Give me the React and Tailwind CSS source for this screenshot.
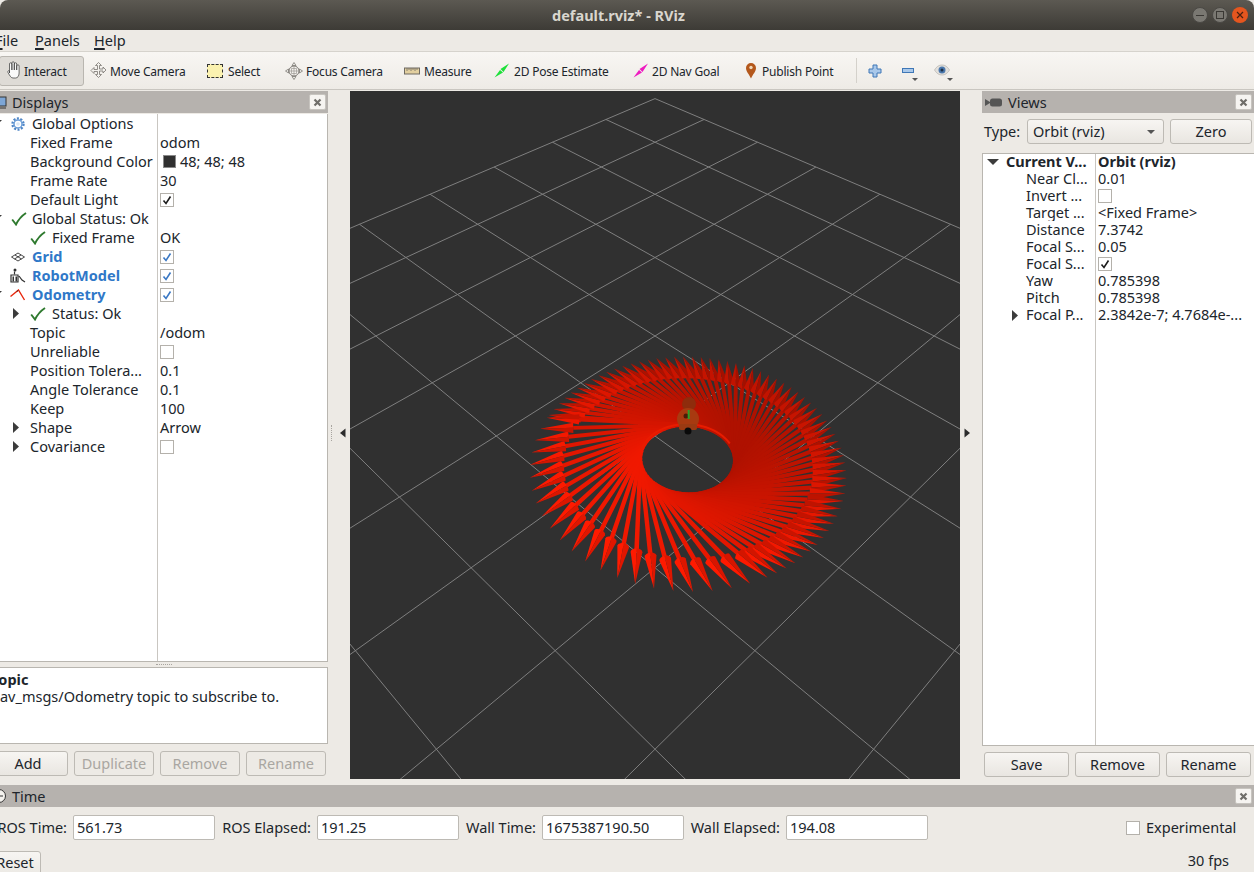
import React from 'react';

const FONT = { fontFamily: '"Noto Sans", sans-serif' };

// ground plane (s, t) to screen pixels, fitted to the grid in the reference
const project = (s, t) => {
  const w = 1 - 0.137 * t;
  return [655 + (158.7 * s) / w, 436 + (113.7 * t) / w];
};
const toPoints = (list) => list.map((p) => `${p[0].toFixed(1)},${p[1].toFixed(1)}`).join(' ');

const buildGrid = () => {
  const lines = [];
  for (let i = -5; i <= 5; i++) {
    // p, q lines of the 10x10 grid, s = (p - q) / 2, t = (p + q) / 2
    const a = project((i + 5) / 2, (i - 5) / 2);
    const b = project((i - 5) / 2, (i + 5) / 2);
    const c = project((-5 - i) / 2, (-5 + i) / 2);
    const d = project((5 - i) / 2, (5 + i) / 2);
    lines.push([a, b], [c, d]);
  }
  return lines;
};

const buildArrows = () => {
  const out = [];
  const r = 0.29;
  const L = 0.92;
  const head = 0.21;
  const cs = 0.2;
  const ct = 0.19;
  const alpha = (Math.atan(L / r) * 180) / Math.PI;
  // walk backwards from the newest pose; poses are further apart in the lower left
  const angles = [];
  let deg = 274;
  while (deg > 274 - 360) {
    angles.unshift(deg);
    const phi = ((deg - alpha) % 360 + 360) % 360;
    deg -= phi > 70 && phi < 205 ? 6.2 : 3.7;
  }
  angles.forEach((a, i) => {
    const th = (a * Math.PI) / 180;
    const px = cs + r * Math.cos(th);
    const py = ct + r * Math.sin(th);
    const dx = Math.sin(th);
    const dy = -Math.cos(th);
    const phi = th - (alpha * Math.PI) / 180;
    const f = 0.88 + 0.14 * Math.cos(phi - (120 * Math.PI) / 180);
    const col = (m) => `rgb(${Math.min(255, Math.round(262 * f * m))},${Math.round(26 * f * m)},0)`;
    const bt = py + dy * (L - head);
    const tt = py + dy * L;
    const P = project(px, py);
    const B = project(px + dx * (L - head), bt);
    const T = project(px + dx * L, tt);
    // cones and shafts are round, so widths are taken on screen, not on the ground
    const len = Math.hypot(T[0] - P[0], T[1] - P[1]);
    const ux = (T[0] - P[0]) / len;
    const uy = (T[1] - P[1]) / len;
    let nx = -uy;
    let ny = ux;
    if (nx > 0) {
      nx = -nx;
      ny = -ny;
    }
    const shaftAt = (Q, t, sign) => {
      const half = 2 / (1 - 0.137 * t);
      return [Q[0] + sign * nx * half, Q[1] + sign * ny * half];
    };
    const hw = 5.2 / (1 - 0.137 * bt);
    const bulge = hw * 0.6 * Math.abs(uy);
    const arc = (sign) =>
      [0.9, 0.6, 0.3, 0].map((c) => {
        const sn = Math.sqrt(1 - c * c);
        return [B[0] + sign * nx * hw * c - ux * bulge * sn, B[1] + sign * ny * hw * c - uy * bulge * sn];
      });
    out.push({
      key: i,
      shaft: toPoints([shaftAt(P, py, 1), shaftAt(B, bt, 1), shaftAt(B, bt, -1), shaftAt(P, py, -1)]),
      shaftColor: col(0.9),
      lit: toPoints([T, [B[0] + nx * hw, B[1] + ny * hw], ...arc(1)]),
      litColor: col(1),
      dark: toPoints([T, [B[0] - nx * hw, B[1] - ny * hw], ...arc(-1)]),
      darkColor: col(0.84),
    });
  });
  return out;
};

const GRID = buildGrid();
const ARROWS = buildArrows();
const RIM = (() => {
  const list = [];
  for (let a = 195; a <= 335; a += 5) {
    const th = (a * Math.PI) / 180;
    list.push(project(0.2 + 0.295 * Math.cos(th), 0.19 + 0.295 * Math.sin(th)));
  }
  return toPoints(list);
})();

const Scene = () => (
  <svg width="610" height="688" viewBox="350 91 610 688" className="block">
    {GRID.map(([a, b], i) => (
      <line key={i} x1={a[0]} y1={a[1]} x2={b[0]} y2={b[1]} stroke="#7f7f7f" strokeWidth="1" />
    ))}
    {ARROWS.map((a) => (
      <g key={a.key}>
        <polygon points={a.shaft} fill={a.shaftColor} />
        <polygon points={a.lit} fill={a.litColor} />
        <polygon points={a.dark} fill={a.darkColor} />
      </g>
    ))}
    <polyline points={RIM} fill="none" stroke="#e81c00" strokeWidth="2" />
    <circle cx="689" cy="404" r="7" fill="#8e2c0c" />
    <circle cx="688" cy="419" r="11" fill="#a83a10" />
    <rect x="679" y="424" width="18" height="6" rx="2" fill="#9a3a12" />
    <circle cx="686" cy="416" r="2.500" fill="#4a1c08" />
    <line x1="688.7" y1="410" x2="688.7" y2="419" stroke="#2aa02a" strokeWidth="2" />
    <circle cx="688" cy="431" r="3.500" fill="#0a0a0a" />
  </svg>
);

const Chevron = ({ open }) =>
  open ? (
    <svg width="12" height="10" viewBox="0 0 12 10" className="block shrink-0">
      <path d="M0 2h12L6 8z" fill="#3c3c3c" />
    </svg>
  ) : (
    <svg width="10" height="11" viewBox="0 0 10 11" className="block shrink-0">
      <path d="M3 0v11L9 5.500z" fill="#3c3c3c" />
    </svg>
  );

const Check = () => (
  <svg width="16" height="14" viewBox="0 0 16 14" className="shrink-0">
    <path d="M1.200 7.500L5 12.500C7.200 8 10.500 4 15 1" fill="none" stroke="#2f7a2f" strokeWidth="1.900" />
  </svg>
);

const CheckBox = ({ on, blue }) => (
  <span className="flex h-[14px] w-[14px] shrink-0 items-center justify-center border border-[#b4b1ab] bg-white">
    {on && (
      <svg width="10" height="10" viewBox="0 0 10 10">
        <path d="M1.500 5.500L4 8.500 8.500 1.500" fill="none" stroke={blue ? '#3a78c4' : '#1c1c1c'} strokeWidth="1.600" />
      </svg>
    )}
  </span>
);

const GearIcon = () => (
  <svg width="14" height="14" viewBox="0 0 14 14" className="shrink-0">
    <circle cx="7" cy="7" r="5.500" fill="none" stroke="#4f86c6" strokeWidth="2.400" strokeDasharray="2 1.450" />
    <circle cx="7" cy="7" r="4" fill="none" stroke="#6d9fd8" strokeWidth="1.500" />
    <circle cx="7" cy="7" r="1.800" fill="#dbe8f6" />
  </svg>
);

const GridIcon = () => (
  <svg width="14" height="10" viewBox="0 0 14 10" className="shrink-0">
    <path d="M7 1L13.500 5 7 9 .5 5zM4 3l6.500 4M10 3L3.500 7" fill="none" stroke="#333" strokeWidth="0.900" />
  </svg>
);

const RobotIcon = () => (
  <svg width="16" height="15" viewBox="0 0 16 15" className="shrink-0">
    <circle cx="5" cy="2" r="1.500" fill="#333" />
    <path d="M1 7h7v7H1zM9 8l3 4 3 2" fill="none" stroke="#333" strokeWidth="1.200" />
    <path d="M2.500 8.500h1.500v5H2.500zM5.500 8.500h1.500v5H5.500z" fill="#333" />
    <path d="M4.500 3.500v3" stroke="#333" strokeWidth="1.200" />
  </svg>
);

const OdomIcon = () => (
  <svg width="17" height="12" viewBox="0 0 17 12" className="shrink-0">
    <path d="M0.500 7.500L8.500 1l6 10" fill="none" stroke="#e8260c" strokeWidth="1.400" />
    <path d="M8.500 1l-2 1 .5 1" fill="#222" />
  </svg>
);

const Row = ({ h = 19, arrow, indent = 0, icon, iconW = 0, label, bold, blue, value, box, boxBlue, swatch, col = 157, valueBold }) => (
  <div className="flex items-center whitespace-nowrap" style={{ height: h }}>
    <div className="relative flex h-full shrink-0 items-center overflow-hidden" style={{ width: col, paddingLeft: indent }}>
      {arrow && <span className="absolute top-[4px]" style={{ left: arrow.x }}><Chevron open={arrow.open} /></span>}
      {icon && <span className="flex shrink-0 items-center" style={{ width: iconW }}>{icon}</span>}
      <span className={`${bold ? 'font-bold' : ''} ${blue ? 'text-[#2f78c8]' : ''}`}>{label}</span>
    </div>
    <div className={`flex h-full flex-1 items-center gap-[4px] border-l border-[#c9c6c1] pl-[2px] ${valueBold ? 'font-bold' : ''}`}>
      {swatch && <span className="ml-[3px] h-[13px] w-[13px] shrink-0 border border-[#8a8a8a] bg-[#303030]" />}
      {value}
      {box && <CheckBox on={box === 'on'} blue={boxBlue} />}
    </div>
  </div>
);

const CloseBtn = () => (
  <span className="flex h-[16px] w-[17px] shrink-0 items-center justify-center rounded-[2px] border border-[#c7c4bf] bg-[#f6f4f1]">
    <svg width="9" height="9" viewBox="0 0 9 9">
      <path d="M1.500 1.500l6 6M7.500 1.500l-6 6" stroke="#6f6d69" strokeWidth="2.200" />
    </svg>
  </span>
);

const DockHeader = ({ icon, title }) => (
  <div className="flex h-[22px] shrink-0 items-center justify-between bg-[#b6b2ae] pr-[2px] text-[14.500px]">
    <div className="flex items-center">
      {icon}
      <span>{title}</span>
    </div>
    <CloseBtn />
  </div>
);

const Btn = ({ children, disabled, className = '' }) => (
  <button
    className={`flex items-center justify-center rounded-[3px] border border-[#bdbab4] text-[14.500px] ${
      disabled ? 'bg-[#edeae5] text-[#a9a6a1]' : 'bg-gradient-to-b from-[#f7f5f2] to-[#e9e6e1]'
    } ${className}`}
  >
    {children}
  </button>
);

const Tool = ({ width, icon, label }) => (
  <div className="flex h-full shrink-0 items-center whitespace-nowrap text-[12px] tracking-[-0.2px]" style={{ width }}>
    {icon}
    <span className="pt-[3px]">{label}</span>
  </div>
);

const TimeField = ({ label, labelW, value }) => (
  <>
    <span className="flex shrink-0 justify-end whitespace-nowrap" style={{ width: labelW }}>{label}</span>
    <span className="ml-[6px] flex h-[25px] w-[142px] shrink-0 items-center rounded-[2px] border border-[#bdbab4] bg-white pl-[3px]">{value}</span>
  </>
);

const Dots = ({ vertical }) => (
  <span className={vertical ? 'h-[16px] w-px border-l border-dotted border-[#a8a5a0]' : 'h-px w-[16px] border-t border-dotted border-[#a8a5a0]'} />
);

export default function App() {
  return (
    <div className="flex h-[872px] w-[1254px] flex-col overflow-hidden bg-[#edeae5] text-[14.500px] leading-none text-[#20252b]" style={FONT}>
      {/* window title */}
      <div className="relative flex h-[30px] shrink-0 items-center justify-center rounded-t-[8px] bg-gradient-to-b from-[#5c5952] to-[#3d3b36] pr-[17px] text-[14.500px] font-bold text-[#d9d6ce]">
        default.rviz* - RViz
        <div className="absolute right-[6px] top-[7px] flex gap-[4px]">
          <span className="flex h-[16px] w-[16px] items-center justify-center rounded-full border border-[#4a4844] bg-[#7a7872]">
            <span className="h-px w-[8px] bg-[#3a3834]" />
          </span>
          <span className="flex h-[16px] w-[16px] items-center justify-center rounded-full border border-[#4a4844] bg-[#7a7872]">
            <span className="h-[8px] w-[8px] border border-[#3a3834]" />
          </span>
          <span className="flex h-[16px] w-[16px] items-center justify-center rounded-full bg-[#e5561f]">
            <svg width="8" height="8" viewBox="0 0 8 8">
              <path d="M1 1l6 6M7 1L1 7" stroke="#4a2010" strokeWidth="1.200" />
            </svg>
          </span>
        </div>
      </div>

      {/* menu */}
      <div className="flex h-[22px] shrink-0 items-center border-b border-[#d6d3cd] text-[14.500px]">
        <span className="-ml-[5px] w-[40px]"><span className="underline decoration-2 underline-offset-2">F</span>ile</span>
        <span className="w-[59px]"><span className="underline decoration-2 underline-offset-2">P</span>anels</span>
        <span><span className="underline decoration-2 underline-offset-2">H</span>elp</span>
      </div>

      {/* toolbar */}
      <div className="flex h-[38px] shrink-0 items-center border-b border-[#c9c6c0] bg-gradient-to-b from-[#f8f6f3] to-[#eeebe6] py-[4px]">
        <div className="-ml-px mr-[6px] flex h-[30px] w-[85px] shrink-0 items-center rounded-[3px] border border-[#b9b6b0] bg-[#dedbd6] pl-[4px] text-[12px] tracking-[-0.2px]">
          <svg width="19" height="19" viewBox="0 0 19 19" className="mr-[1px] shrink-0">
            <path d="M5.500 12V3a1.200 1.200 0 0 1 2.400 0v6V2a1.200 1.200 0 0 1 2.400 0v7-6a1.200 1.200 0 0 1 2.400 0v6-4a1.200 1.200 0 0 1 2.400 0v7c0 3-1.500 5-3.500 5H9c-2 0-3-2-5-5.500-.8-1.500 1-2.500 1.500-1.500z" fill="#fafafa" stroke="#333" strokeWidth="0.700" />
          </svg>
          <span className="pt-[3px]">Interact</span>
        </div>
        <Tool width={117} label="Move Camera" icon={
          <svg width="17" height="17" viewBox="0 0 17 17" className="mr-[3px] shrink-0">
            <path d="M8.500 .5l3 3h-2v3.500h3.500v-2l3 3-3 3v-2H9.500v3.500h2l-3 3-3-3h2V9.500H4v2l-3-3 3-3v2h3.500V3.500h-2z" fill="#f4f2ee" stroke="#77746f" strokeWidth="0.800" />
          </svg>
        } />
        <Tool width={78} label="Select" icon={
          <span className="mr-[5px] h-[14px] w-[16px] shrink-0 border border-dashed border-[#333] bg-[#fbf2b0]" />
        } />
        <Tool width={119} label="Focus Camera" icon={
          <svg width="18" height="18" viewBox="0 0 18 18" className="mr-[3px] shrink-0">
            <path d="M9 .5l2 3H7zM9 17.500l-2-3h4zM.5 9l3-2v4zM17.500 9l-3 2V7z" fill="#f2f0ec" stroke="#7c7974" strokeWidth="0.800" />
            <circle cx="9" cy="9" r="5" fill="#f4f2ee" stroke="#7c7974" />
            <path d="M9 3.500v11M3.500 9h11M6.500 6.500v5M11.500 6.500v5M6.500 6.500h5M6.500 11.500h5" stroke="#9c9994" strokeWidth="0.700" />
          </svg>
        } />
        <Tool width={90} label="Measure" icon={
          <svg width="16" height="8" viewBox="0 0 16 8" className="mr-[4px] shrink-0">
            <rect x=".5" y="1" width="15" height="6" fill="#e2cf9f" stroke="#6e6a62" />
            <path d="M3 1v3M5 1v2M7 1v3M9 1v2M11 1v3M13 1v2" stroke="#6e6a62" strokeWidth="0.800" />
          </svg>
        } />
        <Tool width={139} label="2D Pose Estimate" icon={
          <svg width="16" height="15" viewBox="0 0 16 15" className="mr-[4px] shrink-0">
            <path d="M0.500 14.500L6 7 9 9.500zM15 .5L6.500 6 9.500 9z" fill="#1ee03a" />
          </svg>
        } />
        <Tool width={110} label="2D Nav Goal" icon={
          <svg width="16" height="15" viewBox="0 0 16 15" className="mr-[3px] shrink-0">
            <path d="M0.500 14.500L6 7 9 9.500zM15 .5L6.500 6 9.500 9z" fill="#ee1cc0" />
          </svg>
        } />
        <Tool width={113} label="Publish Point" icon={
          <svg width="12" height="17" viewBox="0 0 12 17" className="ml-[2px] mr-[5px] shrink-0">
            <path d="M6 16.500C4 12 1 9.500 1 6a5 5 0 0 1 10 0c0 3.500-3 6-5 10.500z" fill="#b4581c" />
            <circle cx="6" cy="5.500" r="1.700" fill="#f0d8b8" />
          </svg>
        } />
        <span className="mr-[11px] h-[25px] w-px shrink-0 bg-[#d4d1cb]" />
        <svg width="14" height="14" viewBox="0 0 14 14" className="mr-[19px] shrink-0">
          <path d="M5 1h4v4h4v4H9v4H5V9H1V5h4z" fill="#a9c8ea" stroke="#3f77b6" />
        </svg>
        <div className="relative mr-[19px] h-[14px] w-[14px] shrink-0">
          <span className="absolute left-[1px] top-[4px] h-[5px] w-[12px] border border-[#3f77b6] bg-[#a9c8ea]" />
          <span className="absolute left-[11px] top-[14px] h-0 w-0 border-x-[3px] border-t-[3px] border-x-transparent border-t-[#555]" />
        </div>
        <div className="relative h-[14px] w-[16px] shrink-0">
          <svg width="16" height="12" viewBox="0 0 16 12" className="block">
            <path d="M.5 6C3 2 5.500 1 8 1s5 1 7.500 5C13 10 10.500 11 8 11S3 10 .5 6z" fill="#e2e0dc" stroke="#a9a6a1" strokeWidth="0.600" />
            <circle cx="8" cy="6" r="3.500" fill="#4b78ad" />
            <circle cx="8" cy="6" r="1.500" fill="#1e2f45" />
          </svg>
          <span className="absolute left-[13px] top-[14px] h-0 w-0 border-x-[3px] border-t-[3px] border-x-transparent border-t-[#555]" />
        </div>
      </div>

      {/* main area */}
      <div className="flex h-[694px] shrink-0 pt-px">
        {/* Displays dock */}
        <div className="flex w-[328px] shrink-0 flex-col">
          <DockHeader
            title="Displays"
            icon={
              <svg width="12" height="13" viewBox="0 0 12 13" className="shrink-0">
                <rect x="-5" y="1" width="11" height="9" fill="#7da6d6" stroke="#333" />
                <path d="M-3 12h9" stroke="#333" />
              </svg>
            }
          />
          <div className="mt-px h-[548px] overflow-hidden border-b border-r border-[#b9b6b0] bg-white">
            <Row indent={11} iconW={21} icon={<GearIcon />} label="Global Options" arrow={{ x: -10, open: true }} />
            <Row indent={30} label="Fixed Frame" value="odom" />
            <Row indent={30} label="Background Color" value="48; 48; 48" swatch />
            <Row indent={30} label="Frame Rate" value="30" />
            <Row indent={30} label="Default Light" box="on" />
            <Row indent={11} iconW={21} icon={<Check />} label="Global Status: Ok" arrow={{ x: -10, open: true }} />
            <Row indent={30} iconW={22} icon={<Check />} label="Fixed Frame" value="OK" />
            <Row indent={11} iconW={21} icon={<GridIcon />} label="Grid" bold blue box="on" boxBlue />
            <Row indent={10} iconW={22} icon={<RobotIcon />} label="RobotModel" bold blue box="on" boxBlue />
            <Row indent={10} iconW={22} icon={<OdomIcon />} label="Odometry" bold blue box="on" boxBlue arrow={{ x: -10, open: true }} />
            <Row indent={30} iconW={22} icon={<Check />} label="Status: Ok" arrow={{ x: 10, open: false }} />
            <Row indent={30} label="Topic" value="/odom" />
            <Row indent={30} label="Unreliable" box="off" />
            <Row indent={30} label="Position Tolera..." value="0.1" />
            <Row indent={30} label="Angle Tolerance" value="0.1" />
            <Row indent={30} label="Keep" value="100" />
            <Row indent={30} label="Shape" value="Arrow" arrow={{ x: 10, open: false }} />
            <Row indent={30} label="Covariance" box="off" arrow={{ x: 10, open: false }} />
            <div className="ml-[157px] h-[206px] border-l border-[#c9c6c1]" />
          </div>
          <div className="flex h-[5px] shrink-0 items-center justify-center"><Dots /></div>
          <div className="h-[77px] shrink-0 overflow-hidden border border-l-0 border-[#b9b6b0] bg-white pt-[3px] leading-[17px] whitespace-nowrap">
            <div className="-ml-[9px] font-bold">Topic</div>
            <div className="-ml-[9px]">nav_msgs/Odometry topic to subscribe to.</div>
          </div>
          <div className="mt-[7px] flex h-[25px] shrink-0 gap-[6px]">
            <Btn className="-ml-[12px] h-[25px] w-[80px] shrink-0">Add</Btn>
            <Btn disabled className="h-[25px] w-[80px] shrink-0">Duplicate</Btn>
            <Btn disabled className="h-[25px] w-[80px] shrink-0">Remove</Btn>
            <Btn disabled className="h-[25px] w-[80px] shrink-0">Rename</Btn>
          </div>
        </div>

        {/* left splitter */}
        <div className="flex w-[22px] shrink-0 items-center gap-[7px] pb-[9px] pl-[3px]">
          <Dots vertical />
          <svg width="7" height="10" viewBox="0 0 7 10" className="shrink-0">
            <path d="M6.500 0.500v9L1 5z" fill="#2c2c2c" />
          </svg>
        </div>

        {/* 3D view */}
        <div className="h-[688px] w-[610px] shrink-0 bg-[#303030]">
          <Scene />
        </div>

        {/* right splitter */}
        <div className="flex w-[22px] shrink-0 items-center pb-[9px] pl-[4px]">
          <svg width="7" height="10" viewBox="0 0 7 10" className="shrink-0">
            <path d="M.5 .5v9L6 5z" fill="#2c2c2c" />
          </svg>
        </div>

        {/* Views dock */}
        <div className="flex w-[272px] shrink-0 flex-col">
          <DockHeader
            title="Views"
            icon={
              <svg width="17" height="9" viewBox="0 0 17 9" className="ml-[3px] mr-[6px] shrink-0">
                <path d="M0 1l5 3v1L0 8z" fill="#555" />
                <rect x="5" y="0.500" width="12" height="8" rx="2.500" fill="#555" />
              </svg>
            }
          />
          <div className="mt-[6px] flex h-[25px] shrink-0 items-center pl-[2px]">
            <span className="w-[43px] shrink-0">Type:</span>
            <span className="flex h-[25px] w-[137px] shrink-0 items-center justify-between rounded-[3px] border border-[#bdbab4] bg-gradient-to-b from-[#f7f5f2] to-[#e9e6e1] pl-[5px] pr-[8px]">
              Orbit (rviz)
              <span className="h-0 w-0 border-x-[4px] border-t-[4px] border-x-transparent border-t-[#555]" />
            </span>
            <Btn className="ml-[6px] h-[25px] w-[82px] shrink-0">Zero</Btn>
          </div>
          <div className="mt-[9px] h-[593px] shrink-0 overflow-hidden border border-r-0 border-[#b9b6b0] bg-white">
            <div className="-mt-px">
              <Row h={17} col={112} indent={23} label="Current V..." bold value="Orbit (rviz)" valueBold arrow={{ x: 4, open: true }} />
              <Row h={17} col={112} indent={43} label="Near Cl..." value="0.01" />
              <Row h={17} col={112} indent={43} label="Invert ..." box="off" />
              <Row h={17} col={112} indent={43} label="Target ..." value="<Fixed Frame>" />
              <Row h={17} col={112} indent={43} label="Distance" value="7.3742" />
              <Row h={17} col={112} indent={43} label="Focal S..." value="0.05" />
              <Row h={17} col={112} indent={43} label="Focal S..." box="on" />
              <Row h={17} col={112} indent={43} label="Yaw" value="0.785398" />
              <Row h={17} col={112} indent={43} label="Pitch" value="0.785398" />
              <Row h={17} col={112} indent={43} label="Focal P..." value="2.3842e-7; 4.7684e-..." arrow={{ x: 26, open: false }} />
              <div className="ml-[112px] h-[440px] border-l border-[#c9c6c1]" />
            </div>
          </div>
          <div className="mt-[6px] flex h-[25px] shrink-0 gap-[6px] pl-[2px]">
            <Btn className="h-[25px] w-[85px] shrink-0">Save</Btn>
            <Btn className="h-[25px] w-[85px] shrink-0">Remove</Btn>
            <Btn className="h-[25px] w-[85px] shrink-0">Rename</Btn>
          </div>
        </div>
      </div>

      {/* Time dock */}
      <div className="mt-px shrink-0">
        <DockHeader
          title="Time"
          icon={
            <svg width="12" height="16" viewBox="0 0 12 16" className="shrink-0">
              <circle cx="-1" cy="8" r="6.500" fill="#f4f2ee" stroke="#333" />
              <path d="M-1 8h4" stroke="#333" />
            </svg>
          }
        />
      </div>
      <div className="mt-[8px] flex h-[25px] shrink-0 items-center">
        <TimeField label="ROS Time:" labelW={67} value="561.73" />
        <span className="w-[6px] shrink-0" />
        <TimeField label="ROS Elapsed:" labelW={90} value="191.25" />
        <span className="w-[6px] shrink-0" />
        <TimeField label="Wall Time:" labelW={71} value="1675387190.50" />
        <span className="w-[6px] shrink-0" />
        <TimeField label="Wall Elapsed:" labelW={90} value="194.08" />
        <span className="ml-[198px]"><CheckBox /></span>
        <span className="ml-[6px]">Experimental</span>
      </div>
      <div className="mt-[11px] flex h-[30px] shrink-0 items-start justify-between pr-[25px]">
        <Btn className="-ml-[11px] h-[30px] w-[52px] items-start pt-[3px]">Reset</Btn>
        <span className="pt-[2px]">30 fps</span>
      </div>
    </div>
  );
}
